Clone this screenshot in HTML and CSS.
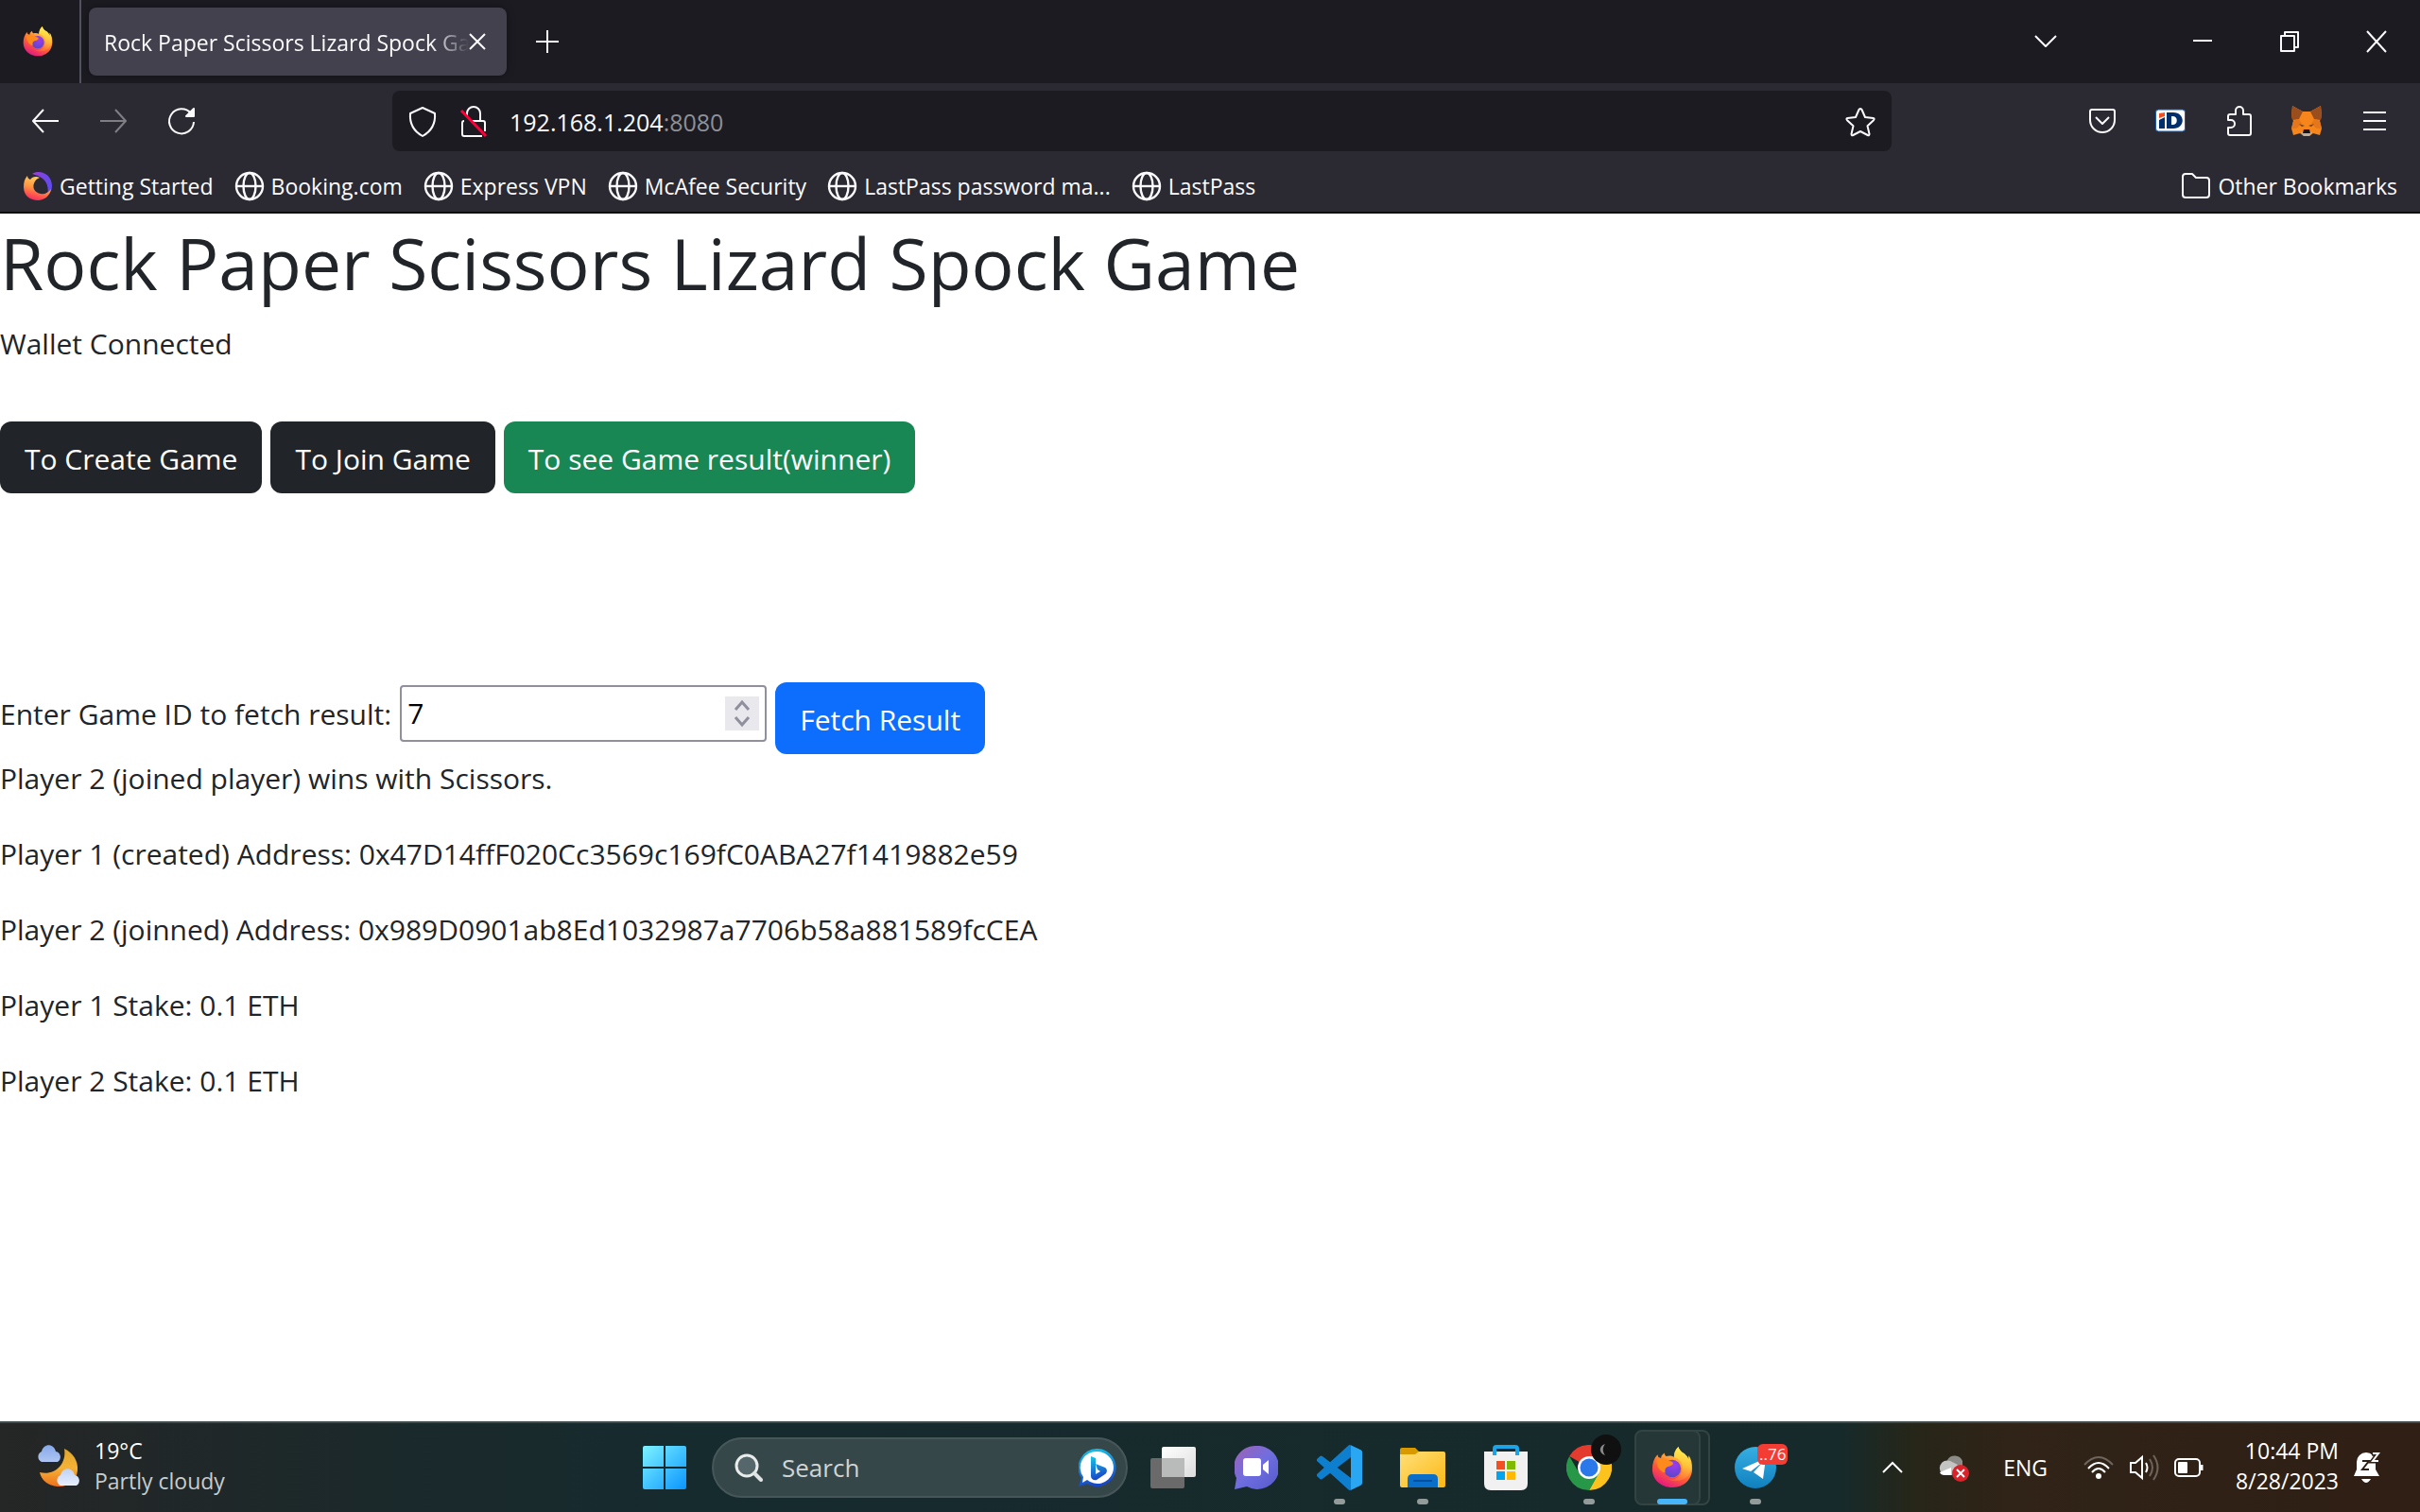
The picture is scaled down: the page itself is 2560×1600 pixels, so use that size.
FILE: index.html
```html
<!DOCTYPE html>
<html lang="en">
<head>
<meta charset="utf-8">
<title>Rock Paper Scissors Lizard Spock Game</title>
<link rel="stylesheet" href="styles.css">
</head>
<body>
<svg class="defs" aria-hidden="true">
  <defs>
    <linearGradient id="ff-body" x1="0.8" y1="0" x2="0.3" y2="1">
      <stop offset="0" stop-color="#fff14f"/><stop offset="0.35" stop-color="#ffa436"/><stop offset="0.65" stop-color="#ff5a36"/><stop offset="1" stop-color="#e31587"/>
    </linearGradient>
    <linearGradient id="ff-flame" x1="0.6" y1="0" x2="0.4" y2="1">
      <stop offset="0" stop-color="#fff44f"/><stop offset="0.5" stop-color="#ffc23a"/><stop offset="1" stop-color="#ff7139" stop-opacity="0.6"/>
    </linearGradient>
    <radialGradient id="ff-core" cx="0.6" cy="0.3" r="0.7">
      <stop offset="0" stop-color="#a03bf0"/><stop offset="1" stop-color="#5b47c8"/>
    </radialGradient>
    <linearGradient id="old-tail" x1="0" y1="0" x2="1" y2="0">
      <stop offset="0" stop-color="#a23ad8"/><stop offset="1" stop-color="#5b4df0"/>
    </linearGradient>
    <linearGradient id="old-body" x1="0.6" y1="0" x2="0.3" y2="1">
      <stop offset="0" stop-color="#ffd567"/><stop offset="0.5" stop-color="#ff9640"/><stop offset="0.8" stop-color="#ff5050"/><stop offset="1" stop-color="#ee2a6b"/>
    </linearGradient>
    <symbol id="firefox" viewBox="0 0 48 48">
      <path fill="url(#ff-body)" d="M31 0c-4 4-5 8-5 12-3-2-6-2-9-1-1-1-2-2-2-4-3 2-4 4-4 6l-3-1-1-3C3 13 1 19 1 26c0 12 10 21 23 21s23-9 23-22c0-6-1-11-4-15v5c-1-3-3-5-5-7-4-2-6-5-7-8z"/>
      <path fill="url(#ff-flame)" d="M31 0c-4 4-5 8-5 12 8 2 11 9 9 16-2 8-9 11-16 9 12 6 25 0 27-12 0-6-1-11-3-15v5c-1-3-3-5-5-7-4-2-6-5-7-8z"/>
      <circle cx="24" cy="25" r="10" fill="url(#ff-core)"/>
      <path fill="#ff8a1c" d="M6 16c4-4 10-4 14 0 3 1 5 1 5 3s-3 3-6 4c-3 1-4 4-3 7-6-1-10-7-10-14z"/>
    </symbol>
    <symbol id="firefox-old" viewBox="0 0 32 32">
      <path fill="url(#old-tail)" d="M10 3C18-2 31 3 31 16c0 4-2 8-5 10 2-8 0-16-8-20-3-2-6-2-8-3z"/>
      <path fill="url(#old-body)" d="M5 5C2 8 1 12 1 17c0 9 7 14 15 14 7 0 13-5 14-12-3 4-7 6-11 5-6-1-9-6-7-11 1-3 3-5 6-6-4-2-8-1-10 2C6 8 5 7 5 5z"/>
    </symbol>
    <symbol id="globe" viewBox="0 0 32 32">
      <g fill="none" stroke="#fbfbfe" stroke-width="2.4"><circle cx="16" cy="16" r="14"/><ellipse cx="16" cy="16" rx="6.500" ry="14"/><path d="M2 16h28"/></g>
    </symbol>
  </defs>
</svg>

<header class="browser">
  <div class="tabbar">
    <span class="pinned"><svg width="32" height="32"><use href="#firefox"/></svg></span>
    <div class="tab">
      <span class="tab-title">Rock Paper Scissors Lizard Spock Game</span>
      <button class="tab-close" aria-label="Close tab"><svg class="icon" width="18" height="18" viewBox="0 0 18 18"><path d="M1 1l16 16M17 1L1 17"/></svg></button>
    </div>
    <button class="new-tab" aria-label="New tab"><svg class="icon" width="24" height="24" viewBox="0 0 24 24"><path d="M12 0v24M0 12h24"/></svg></button>
    <button class="list-tabs" aria-label="List all tabs"><svg class="icon" width="24" height="14" viewBox="0 0 24 14"><path d="M1 1l11 11L23 1"/></svg></button>
    <div class="window-buttons">
      <button aria-label="Minimize"><svg class="icon" width="20" height="20" viewBox="0 0 20 20"><path d="M0 9h20"/></svg></button>
      <button aria-label="Restore"><svg class="icon" width="20" height="24" viewBox="0 0 20 24"><path d="M1 6h14v16H1zM5 6V2h14v16h-4"/></svg></button>
      <button aria-label="Close"><svg class="icon" width="22" height="24" viewBox="0 0 22 24"><path d="M1 1l20 22M21 1L1 23"/></svg></button>
    </div>
  </div>

  <div class="toolbar">
    <div class="nav">
      <button aria-label="Back"><svg class="icon" width="30" height="26" viewBox="0 0 30 26"><path d="M13 1L2 13l11 12M2 13h27"/></svg></button>
      <button aria-label="Forward" disabled><svg class="icon" width="30" height="26" viewBox="0 0 30 26"><path d="M17 1l11 12-11 12M28 13H1"/></svg></button>
      <button aria-label="Reload"><svg class="icon" width="32" height="32" viewBox="0 0 32 32"><path d="M26 8A13 13 0 1 0 29 17"/><path class="solid" d="M29 3v8h-8z"/></svg></button>
    </div>
    <div class="urlbar">
      <svg class="icon" width="32" height="34" viewBox="0 0 32 34"><path d="M16 2l13 6c1 12-4 19-13 24C7 27 2 20 3 8z"/></svg>
      <svg class="icon" width="32" height="34" viewBox="0 0 32 34"><path d="M9 11V8a7 7 0 0 1 14 0v8M13 16h13a2 2 0 0 1 2 2v9M25 32H6a2 2 0 0 1-2-2V18a2 2 0 0 1 2-2"/><path class="strike" d="M3 5l26 27"/></svg>
      <span class="url">192.168.1.204<span class="port">:8080</span></span>
      <svg class="icon" width="34" height="34" viewBox="0 0 34 34"><path d="M17 3q1 0 1.500 1l3.500 8 8.500 1q2 .5.500 2.200l-6.500 6 2 8.600q0 2-1.800 1.200L17 27l-7.700 4q-1.800.8-1.800-1.200l2-8.600-6.500-6q-1.500-1.700.5-2.200l8.500-1 3.500-8q.5-1 1.500-1z"/></svg>
    </div>
    <div class="extensions">
      <button aria-label="Pocket"><svg class="icon" width="32" height="32" viewBox="0 0 32 32"><path d="M5 4h22q2 0 2 2v9a13 13 0 0 1-26 0V6q0-2 2-2zM9 12l7 7 7-7"/></svg></button>
      <button aria-label="iD"><svg width="32" height="26" viewBox="0 0 32 26"><rect x="0.500" y="1" width="31" height="23" rx="3" fill="#fff" stroke="#1d5fa6"/><path fill="#f04e23" d="M4 5l6-1v4l-6 2z"/><path fill="#012f6b" d="M4 12l6-3v12H4zM12 4h7c13 0 13 17 0 17h-7zM17 8v9h2c5 0 5-9 0-9z" fill-rule="evenodd"/></svg></button>
      <button aria-label="Extensions"><svg class="icon" width="32" height="36" viewBox="0 0 32 36"><path d="M7 11h6V7a4 4 0 0 1 8 0v4h6q2 0 2 2v18q0 2-2 2H7q-2 0-2-2v-6h3a4 4 0 0 0 0-8H5v-4q0-2 2-2z"/></svg></button>
      <button aria-label="MetaMask"><svg width="34" height="34" viewBox="0 0 34 34"><path fill="#f6851b" d="M2 1l11 6h8l11-6 1 11-2 5 2 8-2 7-7-2-4 3h-6l-4-3-7 2-2-7 2-8-2-5z"/><path fill="#9a4d1d" d="M2 1l11 6-4 8-7 1-1-4zM32 1L21 7l4 8 7 1 1-4z"/><path fill="#e4761b" d="M9 15l3 5-6 5H1l2-8zM25 15l-3 5 6 5h5l-2-8z"/><path fill="#763e1a" d="M9 20l6 2-3 1zM25 20l-6 2 3 1z"/><path fill="#c0ad9e" d="M11 29l3 4h6l3-4-3-1h-6z"/><path fill="#161616" d="M14 26h6l1 4h-8z"/></svg></button>
      <button aria-label="Application menu"><svg class="icon" width="26" height="22" viewBox="0 0 26 22"><path d="M1 2h24M1 11h24M1 20h24"/></svg></button>
    </div>
  </div>

  <nav class="bookmarks">
    <a href="#"><svg width="32" height="32"><use href="#firefox-old"/></svg>Getting Started</a>
    <a href="#"><svg width="32" height="32"><use href="#globe"/></svg>Booking.com</a>
    <a href="#"><svg width="32" height="32"><use href="#globe"/></svg>Express VPN</a>
    <a href="#"><svg width="32" height="32"><use href="#globe"/></svg>McAfee Security</a>
    <a href="#"><svg width="32" height="32"><use href="#globe"/></svg>LastPass password ma...</a>
    <a href="#"><svg width="32" height="32"><use href="#globe"/></svg>LastPass</a>
    <a class="other" href="#"><svg class="icon" width="32" height="32" viewBox="0 0 32 32"><path d="M5 3h7l4 4h11q3 0 3 3v15q0 3-3 3H5q-3 0-3-3V6q0-3 3-3z"/></svg>Other Bookmarks</a>
  </nav>
</header>

<main class="page">
  <h1>Rock Paper Scissors Lizard Spock Game</h1>
  <p class="status">Wallet Connected</p>
  <div class="actions">
    <button class="btn dark">To Create Game</button>
    <button class="btn dark">To Join Game</button>
    <button class="btn success">To see Game result(winner)</button>
  </div>
  <form class="fetch">
    <label for="game-id">Enter Game ID to fetch result:</label>
    <span class="number">
      <input id="game-id" type="number" value="7">
      <svg width="36" height="36" viewBox="0 0 36 36" aria-hidden="true"><path d="M11 14l7-8 7 8M11 22l7 8 7-8"/></svg>
    </span>
    <button class="btn primary" type="button">Fetch Result</button>
  </form>
  <div class="result">
    <p>Player 2 (joined player) wins with Scissors.</p>
    <p>Player 1 (created) Address: 0x47D14ffF020Cc3569c169fC0ABA27f1419882e59</p>
    <p>Player 2 (joinned) Address: 0x989D0901ab8Ed1032987a7706b58a881589fcCEA</p>
    <p>Player 1 Stake: 0.1 ETH</p>
    <p>Player 2 Stake: 0.1 ETH</p>
  </div>
</main>

<footer class="taskbar">
  <div class="weather">
    <svg width="48" height="48" viewBox="0 0 48 48">
      <defs><linearGradient id="moon" x1="0" y1="0" x2="0" y2="1"><stop offset="0" stop-color="#dfa52e"/><stop offset=".5" stop-color="#f5b335"/><stop offset="1" stop-color="#f0701c"/></linearGradient>
      <linearGradient id="cloud" x1="0" y1="0" x2="0" y2="1"><stop offset="0" stop-color="#86a8ea"/><stop offset="1" stop-color="#e8effc"/></linearGradient></defs>
      <path fill="url(#moon)" d="M30 4c9 4 15 13 14 23-1 11-10 18-21 17C13 43 6 38 4 29c14 4 29-7 26-25z"/>
      <path fill="url(#cloud)" d="M6 18a6 6 0 0 1 0-11C8-2 19-2 21 7a6 6 0 0 1 2 11zM26 43a6 6 0 0 1 0-11c2-9 13-9 15 0a6 6 0 0 1 2 11z"/>
    </svg>
    <div class="lines"><span>19°C</span><span class="muted">Partly cloudy</span></div>
  </div>

  <div class="apps">
    <button class="slot" aria-label="Start"><svg width="46" height="46" viewBox="0 0 46 46">
      <defs><linearGradient id="win" gradientUnits="userSpaceOnUse" x1="0" y1="0" x2="46" y2="46"><stop offset="0" stop-color="#7df3ff"/><stop offset="1" stop-color="#0a95ff"/></linearGradient></defs>
      <path fill="url(#win)" d="M2 0h20v22H0V2q0-2 2-2zM24 0h20q2 0 2 2v20H24zM0 24h22v22H2q-2 0-2-2zM24 24h22v20q0 2-2 2H24z"/></svg></button>
    <div class="search">
      <svg width="30" height="30" viewBox="0 0 30 30"><circle cx="13" cy="13" r="11" fill="#55676a" stroke="#e8ecec" stroke-width="3"/><path d="M21 21l7 7" stroke="#dfe3e3" stroke-width="4" stroke-linecap="round"/></svg>
      <input type="text" placeholder="Search" aria-label="Search">
      <svg width="40" height="40" viewBox="0 0 40 40">
        <defs><linearGradient id="bing" x1="0" y1="0" x2="0.200" y2="1"><stop offset="0" stop-color="#18c8e8"/><stop offset="1" stop-color="#1848c8"/></linearGradient></defs>
        <path fill="url(#bing)" d="M20 0a20 20 0 1 1-11 37l-9 3 3-9A20 20 0 0 1 20 0z"/><path fill="#fff" d="M20 3a17 17 0 1 1-11 30l-5 3 1-6A17 17 0 0 1 20 3z"/>
        <path fill="url(#bing)" d="M13 8l5 2v17l5-3-3-2-2-6 10 4c3 2 2 6 0 7l-9 6c-3 1-6-1-6-4z"/></svg>
    </div>
    <button class="slot" aria-label="Task view"><svg width="48" height="44" viewBox="0 0 48 44">
      <defs><linearGradient id="tv" x1="0" y1="0" x2="1" y2="1"><stop offset="0" stop-color="#fff"/><stop offset="1" stop-color="#ddd"/></linearGradient></defs>
      <rect x="0" y="12" width="36" height="32" rx="2" fill="#6a6a6a"/><rect x="12" y="0" width="36" height="32" rx="2" fill="url(#tv)"/><path fill="#b9bbbb" d="M12 12h24v20H12z"/></svg></button>
    <button class="slot" aria-label="Chat"><svg width="46" height="46" viewBox="0 0 46 46">
      <defs><linearGradient id="chat" x1="0" y1="0" x2="1" y2="1"><stop offset="0" stop-color="#a062b4"/><stop offset=".5" stop-color="#6f6ee0"/><stop offset="1" stop-color="#5558c8"/></linearGradient></defs>
      <path fill="url(#chat)" d="M22 0a23 23 0 1 1-9 43L0 46l2-12A23 23 0 0 1 22 0z"/><rect x="9" y="13" width="19" height="19" rx="3" fill="#fff"/><path fill="#fff" d="M30 20l6-5v15l-6-5z"/></svg></button>
    <button class="slot running" aria-label="Visual Studio Code"><svg width="48" height="48" viewBox="0 0 24 24">
      <path fill="#0e7fce" d="M23.150 2.587L18.210.21a1.494 1.494 0 0 0-1.705.29l-9.460 8.630-4.120-3.128a1 1 0 0 0-1.276.057L.327 7.261A1 1 0 0 0 .326 8.740L3.899 12 .326 15.260a1 1 0 0 0 .001 1.479L1.650 17.940a1 1 0 0 0 1.276.057l4.120-3.128 9.460 8.630a1.492 1.492 0 0 0 1.704.29l4.942-2.377A1.500 1.500 0 0 0 24 20.060V3.939a1.500 1.500 0 0 0-.85-1.352zm-5.146 14.861L10.826 12l7.178-5.448v10.896z"/>
      <path fill="#2aa7f2" d="M18.004.2l5.146 2.387A1.500 1.500 0 0 1 24 3.939V20.060a1.500 1.500 0 0 1-.85 1.352L18.004 23.900z"/></svg></button>
    <button class="slot running" aria-label="File Explorer"><svg width="48" height="42" viewBox="0 0 48 42">
      <defs><linearGradient id="fold" x1="0" y1="0" x2="1" y2="1"><stop offset="0" stop-color="#ffe07a"/><stop offset="1" stop-color="#fcb813"/></linearGradient></defs>
      <path fill="#d99a00" d="M0 2q0-2 2-2h14l4 4v8H0z"/><path fill="url(#fold)" d="M0 7h16l4-3h26q2 0 2 2v34q0 2-2 2H2q-2 0-2-2z"/><path fill="#0a6fc9" d="M8 42V33q0-5 5-5h22q5 0 5 5v9z"/><path stroke="#064f9c" stroke-width="2" d="M14 35h20"/></svg></button>
    <button class="slot" aria-label="Microsoft Store"><svg width="46" height="48" viewBox="0 0 46 48">
      <path fill="#f1f1f1" d="M0 7h46v34q0 7-7 7H7q-7 0-7-7z"/><path fill="none" stroke="#1ba4e8" stroke-width="4" d="M11 11V4q0-2 2-2h20q2 0 2 2v7"/><path fill="#f25022" d="M13 17h9v9h-9z"/><path fill="#7fba00" d="M24 17h9v9h-9z"/><path fill="#00a4ef" d="M13 28h9v9h-9z"/><path fill="#ffb900" d="M24 28h9v9h-9z"/></svg></button>
    <button class="slot running" aria-label="Google Chrome"><svg width="48" height="48" viewBox="0 0 48 48">
      <path fill="#e33b2e" d="M24 24L3.200 12A24 24 0 0 1 44.800 12z"/><path fill="#fcc31e" d="M24 12h20.800A24 24 0 0 1 24 48l10-18z"/><path fill="#279847" d="M3.200 12A24 24 0 0 0 24 48l10.400-18L24 24l-10.400 6z"/><circle cx="24" cy="24" r="12" fill="#fff"/><circle cx="24" cy="24" r="9.500" fill="#2a78ea"/></svg>
      <span class="profile"><svg width="32" height="32" viewBox="0 0 32 32"><circle cx="16" cy="16" r="16" fill="#101010"/><path fill="#8a8a8a" d="M15 10c-7 2-7 10 0 12-3-4-3-8 0-12z"/></svg></span></button>
    <button class="slot active" aria-label="Firefox"><span class="tile-back"></span><span class="tile"><svg width="44" height="44"><use href="#firefox"/></svg></span></button>
    <button class="slot running" aria-label="Telegram"><svg width="44" height="44" viewBox="0 0 44 44">
      <defs><linearGradient id="tg" x1="0" y1="0" x2="0" y2="1"><stop offset="0" stop-color="#37afe2"/><stop offset="1" stop-color="#1080bf"/></linearGradient></defs>
      <circle cx="22" cy="22" r="22" fill="url(#tg)"/><path fill="#fff" d="M8 23l25-11-3 22-10-7 10-11-13 10z"/></svg>
      <span class="badge">..76</span></button>
  </div>

  <div class="tray">
    <svg class="line" width="22" height="14" viewBox="0 0 22 14"><path d="M1 12L11 2l10 10"/></svg>
    <svg class="cloud" width="32" height="32" viewBox="0 0 32 32"><path fill="#8b8c88" d="M9 8a9 9 0 0 1 16 1v8H10z"/><path fill="#c4c5c3" d="M6 24a8 8 0 1 1 6-15l8 4-6 11z"/><path fill="#fff" d="M1 21l12-5v8H6q-4 0-5-3z"/><circle cx="23" cy="22" r="9" fill="#d9222a"/><path stroke="#fff" stroke-width="2" d="M19 18l8 8M27 18l-8 8"/></svg>
    <span class="lang">ENG</span>
    <svg class="line" width="32" height="26" viewBox="0 0 32 26"><path opacity=".3" d="M1 10q15-16 30 0"/><path d="M5 14q11-12 22 0M9 18q7-8 14 0"/><circle cx="16" cy="22" r="3" fill="#fff" stroke="none"/></svg>
    <svg class="line" width="32" height="30" viewBox="0 0 32 30"><path d="M2 10h5l7-6v22l-7-6H2zM18 10q3 5 0 10"/><path opacity=".3" d="M22 6q6 9 0 18M26 2q9 13 0 26"/></svg>
    <svg class="line" width="32" height="22" viewBox="0 0 32 22"><rect x="1" y="2" width="26" height="18" rx="4"/><rect x="4" y="5" width="10" height="12" rx="1" fill="#fff" stroke="none"/><path stroke-width="3" d="M29 8v6"/></svg>
    <div class="lines clock"><span>10:44 PM</span><span>8/28/2023</span></div>
    <svg width="28" height="36" viewBox="0 0 28 36"><path fill="#fff" d="M3 12a10 10 0 0 1 20 0v8l4 7H0l3-7zM8 30h10q-5 8-10 0z"/><path fill="none" stroke="#2f2016" stroke-width="2" d="M9 11h7l-7 9h7"/><path fill="none" stroke="#2f2016" stroke-width="5" d="M19 3h7l-6 8h6"/><path fill="none" stroke="#fff" stroke-width="2" d="M20 3h6l-6 8h6"/></svg>
  </div>
</footer>
</body>
</html>
```
FILE: styles.css
```css
* { box-sizing: border-box; }

body {
  margin: 0;
  min-height: 100vh;
  display: flex;
  flex-direction: column;
  background: #fff;
  color: #212529;
  font-family: "Open Sans", "Noto Sans", sans-serif;
  font-size: 30px;
  line-height: 48px;
}

button {
  font: inherit;
  color: inherit;
  background: none;
  border: 0;
  padding: 0;
}

svg { display: block; flex: none; }
.defs { position: absolute; width: 0; height: 0; }

/* Browser chrome */
.browser {
  background: #2b2a33;
  border-bottom: 2px solid #0c0c0d;
  color: #fbfbfe;
  font-size: 23px;
  line-height: 32px;
}

.icon path { fill: none; stroke: #fbfbfe; stroke-width: 2; stroke-linejoin: round; }
.icon .solid { fill: #fbfbfe; }
.icon .strike { stroke: #ff0039; stroke-width: 3; }

.tabbar {
  display: flex;
  align-items: center;
  height: 88px;
  background: #1c1b22;
}

.pinned {
  display: flex;
  align-items: center;
  width: 86px;
  height: 88px;
  padding-left: 24px;
  border-right: 2px solid #52525e;
}

.tab {
  display: flex;
  align-items: center;
  width: 442px;
  height: 72px;
  margin-left: 8px;
  padding: 0 22px 0 16px;
  border-radius: 8px;
  background: #42414d;
  box-shadow: 0 0 8px rgba(0, 0, 0, .4);
}

.tab-title {
  flex: 1;
  padding-top: 2px;
  overflow: hidden;
  white-space: nowrap;
  mask-image: linear-gradient(to left, transparent, #000 40px);
}

.new-tab { margin-left: 31px; }
.list-tabs { margin-left: auto; }

.window-buttons { display: flex; margin-left: 108px; }
.window-buttons button { display: grid; place-items: center; width: 92px; height: 88px; }

.toolbar { display: flex; align-items: center; height: 80px; padding: 0 12px; }
.nav, .extensions { display: flex; }
.nav button, .extensions button { display: grid; place-items: center; width: 72px; height: 64px; }
.nav button:disabled { opacity: .4; }

.urlbar {
  flex: 1;
  display: flex;
  align-items: center;
  gap: 22px;
  height: 64px;
  margin: 0 187px;
  padding: 2px 16px 0;
  border-radius: 8px;
  background: #1c1b22;
  font-size: 25px;
}

.url { flex: 1; }
.port { color: #8f8f98; }

.bookmarks { display: flex; align-items: center; gap: 22px; height: 56px; padding: 2px 24px 0; }
.bookmarks a { display: flex; align-items: center; gap: 7px; color: inherit; text-decoration: none; white-space: nowrap; }
.bookmarks .other { margin-left: auto; }

/* Game page */
.page { flex: 1; padding-top: 4px; }
.page p { margin: 0 0 32px; }

h1 {
  margin: 0 0 14px;
  font-size: 75px;
  font-weight: 400;
  line-height: 96px;
}

.page .status { margin-bottom: 58px; }
.actions { display: flex; gap: 9px; }

.btn {
  height: 76px;
  padding: 4px 26px 0;
  border-radius: 12px;
  color: #fff;
  white-space: nowrap;
}

.dark { background: #212529; }
.success { background: #198754; }
.primary { background: #0d6efd; }

.fetch { display: flex; align-items: flex-start; gap: 9px; margin-top: 200px; }
.fetch label { padding-top: 10px; }

.number {
  display: flex;
  align-items: center;
  width: 388px;
  height: 60px;
  margin-top: 3px;
  padding: 0 6px;
  border: 2px solid #8f8f9d;
  border-radius: 4px;
}

.number input {
  flex: 1;
  min-width: 0;
  padding: 0;
  border: 0;
  outline: 0;
  color: #000;
  font: inherit;
  appearance: textfield;
}

.number svg { background: #e9e9ed; }
.number path { fill: none; stroke: #8f8f9d; stroke-width: 3; }
.result { margin-top: 2px; }

/* Taskbar */
.taskbar {
  display: grid;
  grid-template-columns: 1fr auto 1fr;
  align-items: center;
  height: 96px;
  border-top: 2px solid #424b4b;
  background: linear-gradient(90deg, #252626 0, #1b292b 16%, #162b2e 28%, #162a2b 76%, #262619 79%, #302317 83%, #2f1f15 100%);
  color: #fff;
  font-size: 23px;
  line-height: 32px;
}

.weather { display: flex; align-items: center; gap: 14px; padding-left: 38px; }
.lines { display: flex; flex-direction: column; padding-bottom: 4px; }
.muted { color: #c8cccc; }

.apps { display: flex; align-items: center; }
.slot { position: relative; display: grid; place-items: center; width: 88px; height: 94px; }

.running::after, .active::after {
  content: "";
  position: absolute;
  z-index: 2;
  bottom: 8px;
  left: 38px;
  width: 12px;
  height: 6px;
  border-radius: 3px;
  background: #939b9b;
}

.active::after { left: 28px; width: 32px; background: #48b5f8; }

.search {
  display: flex;
  align-items: center;
  width: 440px;
  height: 64px;
  margin: 0 4px 0 6px;
  padding: 0 10px 0 22px;
  border: 2px solid #475759;
  border-radius: 32px;
  background: #36474a;
}

.search input {
  flex: 1;
  min-width: 0;
  margin-left: 20px;
  padding: 0;
  border: 0;
  background: none;
  font: inherit;
  font-size: 26px;
}

.search input::placeholder { color: #d0d4d4; opacity: 1; }

.tile, .tile-back {
  height: 80px;
  border: 2px solid #334443;
  border-radius: 8px;
}

.tile {
  z-index: 1;
  display: grid;
  align-items: center;
  justify-self: start;
  width: 70px;
  margin-left: 4px;
  padding-left: 16px;
  background: #253837;
}

.tile-back { position: absolute; top: 7px; left: 24px; width: 60px; background: #1d302f; }

.profile { position: absolute; top: 12px; left: 46px; }

.badge {
  position: absolute;
  top: 22px;
  left: 46px;
  padding: 0 2px;
  border-radius: 6px;
  background: #f23c34;
  font-size: 17px;
  line-height: 22px;
}

.tray { display: flex; align-items: center; justify-content: flex-end; padding-right: 42px; }
.tray > svg { margin-left: 16px; }
.line { fill: none; stroke: #fff; stroke-width: 2; }
.lang { margin: 0 22px 0 36px; }
.tray .cloud { margin-left: 38px; }
.clock { margin-left: 33px; text-align: right; }
```
